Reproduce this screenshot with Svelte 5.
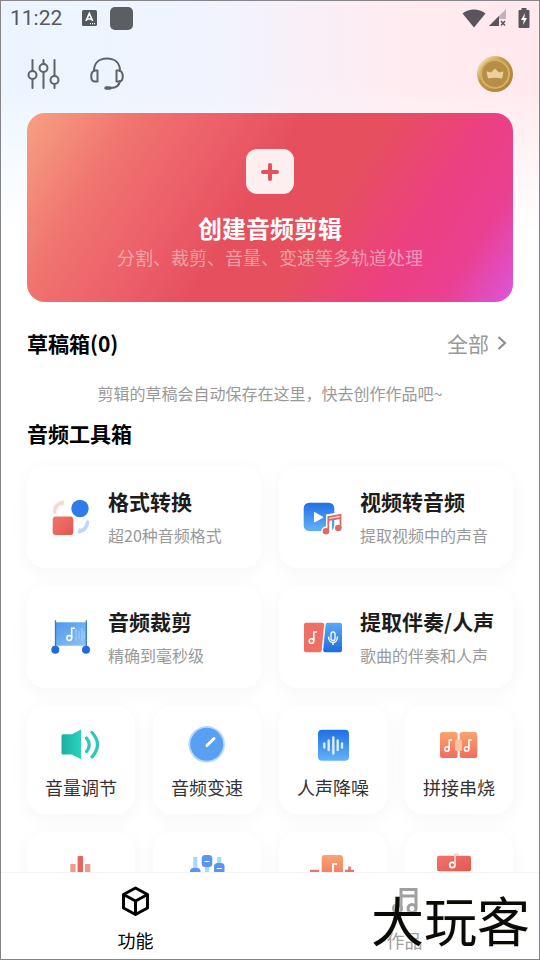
<script>
  let tab = $state("tools");

  const mainTools = [
    { icon: "convert", name: "格式转换", note: "超20种音频格式" },
    { icon: "video", name: "视频转音频", note: "提取视频中的声音" },
    { icon: "trim", name: "音频裁剪", note: "精确到毫秒级" },
    { icon: "extract", name: "提取伴奏/人声", note: "歌曲的伴奏和人声" },
  ];

  const smallTools = [
    { icon: "volume", name: "音量调节" },
    { icon: "speed", name: "音频变速" },
    { icon: "denoise", name: "人声降噪" },
    { icon: "splice", name: "拼接串烧" },
    { icon: "bars", name: "" },
    { icon: "mixer", name: "" },
    { icon: "pitch", name: "" },
    { icon: "cover", name: "" },
  ];
</script>

<!-- shared gradients for the tool icons -->
<svg class="defs" aria-hidden="true">
  <defs>
    <linearGradient id="blue" x1="0" y1="0" x2="0" y2="1">
      <stop offset="0" stop-color="#1f6fe5" />
      <stop offset="1" stop-color="#62b2fa" />
    </linearGradient>
    <linearGradient id="blueUp" x1="0" y1="0" x2="0" y2="1">
      <stop offset="0" stop-color="#5aabf5" />
      <stop offset="1" stop-color="#1e6be0" />
    </linearGradient>
    <linearGradient id="flag" x1="0" y1="0" x2="1" y2="1">
      <stop offset="0" stop-color="#4f98ea" />
      <stop offset="1" stop-color="#8cc4fa" />
    </linearGradient>
    <linearGradient id="red" x1="0" y1="0" x2="1" y2="1">
      <stop offset="0" stop-color="#f1766e" />
      <stop offset="1" stop-color="#e4564e" />
    </linearGradient>
    <linearGradient id="orange" x1="0" y1="0" x2="0" y2="1">
      <stop offset="0" stop-color="#fba36e" />
      <stop offset="1" stop-color="#ef6d62" />
    </linearGradient>
    <linearGradient id="teal" x1="0" y1="0" x2="1" y2="0">
      <stop offset="0" stop-color="#1aaf9f" />
      <stop offset="1" stop-color="#2bd3bf" />
    </linearGradient>
    <linearGradient id="gold" x1="0" y1="0" x2="1" y2="1">
      <stop offset="0.1" stop-color="#f3e2b4" />
      <stop offset="0.4" stop-color="#c39a4c" />
      <stop offset="1" stop-color="#a67a33" />
    </linearGradient>
  </defs>
</svg>

{#snippet toolIcon(name)}
  {#if name === "convert"}
    <path d="M3 17C2.500 10 7 4.500 14.500 4.500L13 10.500C12.500 8 7 9 6 17q-1.500 1.500-3 0z" fill="#f9d6d3" />
    <path d="M39 25c.5 7-4 12.500-11.500 12.500L29 31.500c.5 2.500 6 1.500 7-6.500q1.500-1.500 3 0z" fill="#bcd8fb" />
    <circle cx="30" cy="12.500" r="8.700" fill="#2f7bea" />
    <rect x="2.700" y="20.500" width="20.600" height="18.500" rx="3" fill="url(#red)" />
  {:else if name === "video"}
    <rect x="1.700" y="6.700" width="30.600" height="28.300" rx="5.500" fill="url(#blue)" />
    <path d="M12.500 16.500v9.500l8.500-4.700z" fill="#fff" stroke="#fff" stroke-linejoin="round" />
    <path d="M27 35V21l12-2v13" fill="none" stroke="#fff" stroke-width="6" />
    <circle cx="24" cy="35.300" r="4.800" fill="#fff" />
    <path d="M26.300 35V21l12.200-2.200V32M26.300 24l12.200-2" fill="none" stroke="#dc6b65" stroke-width="1.800" />
    <circle cx="24" cy="35.300" r="3.300" fill="#dc6b65" />
    <circle cx="36.300" cy="32" r="3.300" fill="#dc6b65" />
  {:else if name === "trim"}
    <rect x="5" y="6.300" width="31.600" height="23.400" fill="url(#flag)" />
    <path d="M5.500 4.300V33M36.300 4.300V33" stroke="#3679cf" stroke-width="1.300" />
    <path d="M26 13v12M29 15v8M32 12v13M34 15v8" stroke="#b5dafb" stroke-width=".8" />
    <circle cx="5.300" cy="33.700" r="4" fill="#226bd6" />
    <circle cx="36" cy="33.700" r="4" fill="#226bd6" />
    <circle cx="19.300" cy="22" r="2.400" fill="none" stroke="#fff" stroke-width="1.500" />
    <path d="M21.700 22V12.300h3.300" fill="none" stroke="#fff" stroke-width="1.500" />
  {:else if name === "extract"}
    <path d="M4 6.700h16.300q2 0 1.800 2l-2.400 25.600q-.2 2-2.200 2H4q-2 0-2-2V8.700q0-2 2-2z" fill="#ef6f67" />
    <path d="M25.500 6.700H38q2 0 2 2v25.600q0 2-2 2H23q-2 0-1.800-2l2.400-25.600q.2-2 1.900-2z" fill="url(#blueUp)" />
    <circle cx="9.500" cy="25" r="2.300" fill="none" stroke="#fff" stroke-width="1.600" />
    <path d="M11.800 25v-9h3.200" fill="none" stroke="#fff" stroke-width="1.600" />
    <rect x="29" y="16" width="4" height="8.500" rx="2" fill="none" stroke="#fff" stroke-width="1.300" />
    <path d="M26.500 20.500c0 8 9 8 9 0M31 26.500v2.500" fill="none" stroke="#fff" stroke-width="1.500" />
  {:else if name === "volume"}
    <path d="M2 9.300h9L20 4.500v29.700L11 29.500H2q-1.500 0-1.500-1.500V11q0-1.700 1.500-1.700z" fill="url(#teal)" />
    <path d="M25.500 13q5.500 7 0 13.500M31 7.500q11 12 0 24.500" fill="none" stroke="#2cc9b8" stroke-width="3.200" stroke-linecap="round" />
  {:else if name === "speed"}
    <circle cx="19.700" cy="19.300" r="18.300" fill="#b5dafb" />
    <circle cx="19.700" cy="19.300" r="16.500" fill="#59a0f5" />
    <path d="M20 20.500l7-7" stroke="#fff" stroke-width="3" stroke-linecap="round" />
  {:else if name === "denoise"}
    <rect x="5" y="4.700" width="31" height="31" rx="4" fill="url(#blue)" />
    <path d="M11.300 18.500v4M15.700 15.500v9.500M20.300 12.500v16M24.700 15.500v9.500M29 18.500v4" stroke="#d9efff" stroke-width="2.400" stroke-linecap="round" />
  {:else if name === "splice"}
    <rect x="1" y="7" width="17.600" height="26" rx="2.500" fill="url(#orange)" />
    <rect x="20.700" y="7" width="17.600" height="26" rx="2.500" fill="url(#orange)" />
    <rect x="16" y="14.500" width="7" height="11.500" rx="2" fill="#fdc4a4" />
    <circle cx="8" cy="24" r="2.200" fill="none" stroke="#fff" stroke-width="1.500" />
    <circle cx="27.700" cy="24" r="2.200" fill="none" stroke="#fff" stroke-width="1.500" />
    <path d="M10.200 24v-9h3M29.900 24v-9h3" fill="none" stroke="#fff" stroke-width="1.500" />
  {:else if name === "bars"}
    <rect x="9.300" y="13" width="5.300" height="24" fill="#f09a90" />
    <rect x="16.600" y="5" width="5.500" height="32" rx="1" fill="#e2685f" />
    <rect x="24" y="13" width="5.300" height="24" fill="#f09a90" />
  {:else if name === "mixer"}
    <path d="M8.300 6v26M20 8v26M32.200 6v26" stroke="#a9d6fb" stroke-width="4" />
    <rect x="3" y="17" width="10.500" height="13" rx="3.500" fill="#5795ee" />
    <rect x="14.700" y="4" width="10.600" height="12" rx="3.500" fill="#5795ee" />
    <rect x="27" y="12" width="10.500" height="13" rx="3.500" fill="#5795ee" />
    <path d="M17.500 10.500h5M29.800 17.500h5" stroke="#fff" stroke-width="1.200" />
  {:else if name === "pitch"}
    <rect x="8.700" y="4" width="21.300" height="28" rx="3" fill="url(#orange)" />
    <path d="M20 26V13h4" fill="none" stroke="#fff" stroke-width="1.800" />
    <path d="M-3 20h9M32 20h9M36.500 15.500v9" stroke="#e87469" stroke-width="2.600" />
  {:else}
    <rect x="-2" y="4.700" width="34" height="15.500" rx="2" fill="url(#red)" />
    <circle cx="13.300" cy="14" r="2.600" fill="none" stroke="#fff" stroke-width="1.800" />
    <path d="M16 14V3.500h4" fill="none" stroke="#fbd0cd" stroke-width="1.800" />
  {/if}
{/snippet}

<div class="app">
  <div class="status">
    <span class="time">11:22</span>
    <svg class="input-mark" viewBox="0 0 15 16">
      <rect width="15" height="16" rx="1.500" fill="#55585c" />
      <path d="M4 11L7.300 3.500 10.700 11M5.300 9h4" fill="none" stroke="#fff" stroke-width="1.700" />
      <path d="M8 13.600h5" stroke="#fff" stroke-width="1.200" stroke-dasharray="1 1" />
    </svg>
    <span class="square"></span>
    <svg class="wifi" viewBox="0 0 24 19">
      <path d="M.5 4.500C7-1 17-1 23.500 4.500L12 18.500z" fill="#5a555c" />
    </svg>
    <svg class="signal" viewBox="0 0 18 18">
      <path d="M17 0v17H0z" fill="#bfb3bc" />
      <path d="M10 7v10H0z" fill="#5a555c" />
      <path d="M10 10h8v8h-8z" fill="#ffe9ee" />
      <path d="M12 12l4 4.500M16 12l-4 4.500" stroke="#5a555c" stroke-width="1.500" />
    </svg>
    <svg class="battery" viewBox="0 0 12 20">
      <path d="M3.500 0h5v2H10.500q1 0 1 1v16q0 1-1 1h-9q-1 0-1-1V3q0-1 1-1h2z" fill="#5a555c" />
      <path d="M7 5l-4 7h2.700l-.7 5 4-7H6.300z" fill="#fff" />
    </svg>
  </div>

  <header>
    <button class="plain" aria-label="设置">
      <svg width="32" height="32" viewBox="0 0 32 32" fill="none" stroke="#5f6368" stroke-width="2" stroke-linecap="round">
        <path d="M4.500 2v11M4.500 21v9M15.500 2v4M15.500 14v16M26.500 2v16M26.500 26v4" />
        <circle cx="4.500" cy="17" r="4" />
        <circle cx="15.500" cy="10" r="4" />
        <circle cx="26.500" cy="22" r="4" />
      </svg>
    </button>
    <button class="plain" aria-label="客服">
      <svg width="34" height="34" viewBox="0 0 34 34" fill="none" stroke="#5f6368" stroke-width="2" stroke-linecap="round">
        <path d="M4 14C4 6 9 1.500 17 1.500S30 6 30 14M30 24c-1 5-4 7-9 7" />
        <path d="M7.500 13.500v11H5c-5 0-5-10 0-11zM26.500 13.500v11H29c5 0 5-10 0-11z" stroke-linejoin="round" />
        <path d="M16 31h4" stroke-width="3.500" />
      </svg>
    </button>
    <button class="plain coin" aria-label="会员">
      <svg width="36" height="36" viewBox="0 0 36 36">
        <circle cx="18" cy="18" r="18" fill="url(#gold)" />
        <circle cx="18" cy="18" r="14" fill="#b78e48" stroke="#d6b25f" stroke-width="2" />
        <path d="M9.500 15.500l4.500 1 4-4 4 4 4.500-1-1.500 7q-7-1.300-14 0z" fill="#efd09a" />
      </svg>
    </button>
  </header>

  <main>
    <button class="hero">
      <span class="plus">
        <svg width="18" height="18" viewBox="0 0 18 18">
          <path d="M9 2v14M2 9h14" stroke="#e4505f" stroke-width="4" stroke-linecap="round" />
        </svg>
      </span>
      <strong>创建音频剪辑</strong>
      <small>分割、裁剪、音量、变速等多轨道处理</small>
    </button>

    <section class="drafts">
      <div class="heading">
        <h2>草稿箱(0)</h2>
        <a href="#drafts">
          全部
          <svg width="10" height="16" viewBox="0 0 10 16">
            <path d="M1.500 2L8 8l-6.500 6" fill="none" stroke="#8a8a8a" stroke-width="2" />
          </svg>
        </a>
      </div>
      <p>剪辑的草稿会自动保存在这里，快去创作作品吧~</p>
    </section>

    <section>
      <h2>音频工具箱</h2>
      <div class="wide-grid">
        {#each mainTools as tool}
          <button class="card wide">
            <svg width="42" height="42" viewBox="0 0 42 42">{@render toolIcon(tool.icon)}</svg>
            <span class="text">
              <strong>{tool.name}</strong>
              <small>{tool.note}</small>
            </span>
          </button>
        {/each}
      </div>
      <div class="small-grid">
        {#each smallTools as tool}
          <button class="card small">
            <svg width="40" height="40" viewBox="0 0 40 40">{@render toolIcon(tool.icon)}</svg>
            <span>{tool.name}</span>
          </button>
        {/each}
      </div>
    </section>
  </main>

  <nav>
    <button class:active={tab === "tools"} onclick={() => (tab = "tools")}>
      <svg width="30" height="30" viewBox="0 0 30 30" fill="none" stroke="currentColor" stroke-width="3" stroke-linejoin="round">
        <path d="M14.500 2l12 6.500v13.500l-12 6.500-12-6.500V8.500zM2.500 8.500l12 6.500 12-6.500M14.500 15v13.500" />
      </svg>
      功能
    </button>
    <button class:active={tab === "works"} onclick={() => (tab = "works")}>
      <svg width="30" height="30" viewBox="0 0 30 30" fill="none" stroke="currentColor" stroke-width="3">
        <path d="M11 22V3.500h15V22M11 10h15" />
        <circle cx="7.500" cy="22.500" r="4" />
        <circle cx="22" cy="22.500" r="4" />
      </svg>
      作品
    </button>
    <span class="brand">大玩客</span>
  </nav>
</div>

<style>
  :global(body) {
    margin: 0;
    background: #fff;
  }

  .app {
    box-sizing: border-box;
    height: 100vh;
    display: flex;
    flex-direction: column;
    border: 1px solid #858589;
    overflow: hidden;
    background:
      linear-gradient(180deg, rgba(255, 255, 255, 0) 80px, #fff 230px),
      linear-gradient(90deg, #ebf5ff 0%, #f1f3fd 40%, #ffebf0 75%, #ffe9ee 100%);
    font-family: "Noto Sans CJK SC", sans-serif;
    color: #000;
  }

  .defs {
    position: absolute;
    width: 0;
    height: 0;
  }

  svg {
    display: block;
    flex: none;
    overflow: visible;
  }

  button {
    font: inherit;
    color: inherit;
    border: 0;
    padding: 0;
    background: none;
    cursor: pointer;
  }

  .status {
    flex: none;
    display: flex;
    align-items: center;
    height: 34px;
    padding: 0 9px;
  }

  .time {
    font: 21px/34px Roboto, sans-serif;
    color: #55585c;
    margin-right: 20px;
  }

  .input-mark {
    width: 15px;
    height: 16px;
  }

  .square {
    width: 23px;
    height: 23px;
    margin-left: 13px;
    border-radius: 5px;
    background: #5b5e62;
  }

  .wifi {
    width: 24px;
    height: 19px;
    margin-left: auto;
  }

  .signal {
    width: 18px;
    height: 18px;
    margin: 0 11px 0 3px;
  }

  .battery {
    width: 12px;
    height: 20px;
  }

  header {
    flex: none;
    display: flex;
    align-items: center;
    gap: 30px;
    height: 78px;
    padding: 0 26px 0 27px;
  }

  .coin {
    margin-left: auto;
  }

  main {
    flex: 1;
    min-height: 0;
    padding: 0 26px;
    overflow: hidden;
  }

  .hero {
    box-sizing: border-box;
    width: 100%;
    min-height: 189px;
    padding: 36px 0 30px;
    display: flex;
    flex-direction: column;
    align-items: center;
    border-radius: 18px;
    color: #fff;
    background: linear-gradient(122deg, #f6a183 0%, #f0746f 18%, #ec606a 33%, #e6505e 46%, #e6505e 60%, #ec4080 76%, #ea4091 88%, #dc55dd 100%);
  }

  .plus {
    display: grid;
    place-items: center;
    width: 48px;
    height: 45px;
    margin-bottom: 18px;
    border-radius: 11px;
    background: rgba(255, 255, 255, 0.9);
  }

  .hero strong {
    font-size: 24px;
    line-height: 32px;
  }

  .hero small {
    font-size: 18px;
    line-height: 26px;
    color: rgba(255, 255, 255, 0.45);
  }

  .drafts {
    padding: 23px 0 12px;
  }

  .heading {
    display: flex;
    align-items: center;
    justify-content: space-between;
  }

  h2 {
    margin: 0;
    font-size: 21px;
    line-height: 32px;
  }

  .heading a {
    display: flex;
    align-items: center;
    gap: 8px;
    padding-right: 6px;
    font-size: 21px;
    line-height: 36px;
    color: #999;
    text-decoration: none;
  }

  p {
    margin: 20px 0 0;
    text-align: center;
    font-size: 16px;
    line-height: 24px;
    color: #999;
  }

  .wide-grid,
  .small-grid {
    display: grid;
    gap: 18px;
  }

  .wide-grid {
    grid-template-columns: repeat(2, 1fr);
    margin: 17px 0 18px;
  }

  .small-grid {
    grid-template-columns: repeat(4, 1fr);
  }

  .card {
    box-sizing: border-box;
    display: flex;
    align-items: center;
    border-radius: 18px;
    background: #fff;
    box-shadow: 0 4px 20px rgba(0, 0, 0, 0.04);
  }

  .wide {
    gap: 16px;
    padding: 16px 0 16px 23px;
    text-align: left;
  }

  .text {
    display: flex;
    flex-direction: column;
    padding-top: 2px;
    white-space: nowrap;
  }

  .text strong {
    font-size: 21px;
    line-height: 34px;
    color: #1c1c1c;
  }

  .text small {
    font-size: 16px;
    line-height: 34px;
    color: #999;
  }

  .small {
    flex-direction: column;
    gap: 8px;
    min-height: 108px;
    padding: 19px 0 13px;
    font-size: 18px;
    line-height: 28px;
    color: #333;
  }

  nav {
    flex: none;
    position: relative;
    display: flex;
    height: 86px;
    border-top: 1px solid #f4f4f4;
    background: #fff;
  }

  nav button {
    flex: 1;
    display: flex;
    flex-direction: column;
    align-items: center;
    gap: 10px;
    padding-top: 13px;
    font-size: 18px;
    line-height: 28px;
    color: #a0a0a0;
  }

  nav .active {
    color: #000;
  }

  /* brand mark lies over the right end of the tab bar */
  .brand {
    position: absolute;
    right: 9px;
    bottom: 10px;
    font-size: 53px;
    line-height: 60px;
    font-weight: 400;
    color: #0a0a0a;
    text-shadow: 0 0 2px #f3ecc8;
    pointer-events: none;
  }
</style>
